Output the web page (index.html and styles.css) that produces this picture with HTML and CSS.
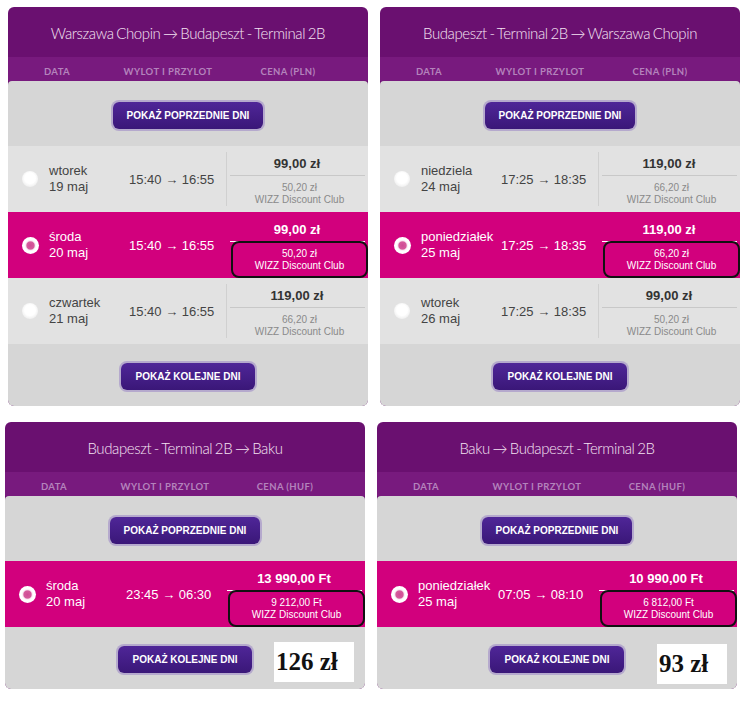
FILE: index.html
```html
<!DOCTYPE html>
<html>
<head>
  <meta charset="utf-8">
  <link rel="stylesheet" href="styles.css">
</head>
<body>
  <div class="board">
    <div class="pair pair-top">
      <section class="flight">
        <div class="flight-title">Warszawa Chopin → Budapeszt - Terminal 2B</div>
        <div class="cols"><span>Data</span><span>Wylot i przylot</span><span>Cena (PLN)</span></div>
        <div class="flight-body">
          <div class="more more-prev"><button class="btn">Pokaż poprzednie dni</button></div>
          <div class="day">
            <span class="radio"></span>
            <div class="date">wtorek<br>19 maj</div>
            <div class="time">15:40 → 16:55</div>
            <div class="price"><b>99,00 zł</b><div class="rule"></div><div class="club">50,20 zł<br>WIZZ Discount Club</div></div>
          </div>
          <div class="day day-on">
            <span class="radio"></span>
            <div class="date">środa<br>20 maj</div>
            <div class="time">15:40 → 16:55</div>
            <div class="price"><b>99,00 zł</b><div class="rule"></div><div class="club">50,20 zł<br>WIZZ Discount Club</div></div>
          </div>
          <div class="day">
            <span class="radio"></span>
            <div class="date">czwartek<br>21 maj</div>
            <div class="time">15:40 → 16:55</div>
            <div class="price"><b>119,00 zł</b><div class="rule"></div><div class="club">66,20 zł<br>WIZZ Discount Club</div></div>
          </div>
          <div class="more more-next"><button class="btn">Pokaż kolejne dni</button></div>
        </div>
      </section>

      <section class="flight">
        <div class="flight-title">Budapeszt - Terminal 2B → Warszawa Chopin</div>
        <div class="cols"><span>Data</span><span>Wylot i przylot</span><span>Cena (PLN)</span></div>
        <div class="flight-body">
          <div class="more more-prev"><button class="btn">Pokaż poprzednie dni</button></div>
          <div class="day">
            <span class="radio"></span>
            <div class="date">niedziela<br>24 maj</div>
            <div class="time">17:25 → 18:35</div>
            <div class="price"><b>119,00 zł</b><div class="rule"></div><div class="club">66,20 zł<br>WIZZ Discount Club</div></div>
          </div>
          <div class="day day-on">
            <span class="radio"></span>
            <div class="date">poniedziałek<br>25 maj</div>
            <div class="time">17:25 → 18:35</div>
            <div class="price"><b>119,00 zł</b><div class="rule"></div><div class="club">66,20 zł<br>WIZZ Discount Club</div></div>
          </div>
          <div class="day">
            <span class="radio"></span>
            <div class="date">wtorek<br>26 maj</div>
            <div class="time">17:25 → 18:35</div>
            <div class="price"><b>99,00 zł</b><div class="rule"></div><div class="club">50,20 zł<br>WIZZ Discount Club</div></div>
          </div>
          <div class="more more-next"><button class="btn">Pokaż kolejne dni</button></div>
        </div>
      </section>
    </div>

    <div class="pair pair-bottom">
      <section class="flight">
        <div class="flight-title">Budapeszt - Terminal 2B → Baku</div>
        <div class="cols"><span>Data</span><span>Wylot i przylot</span><span>Cena (HUF)</span></div>
        <div class="flight-body">
          <div class="more more-prev"><button class="btn">Pokaż poprzednie dni</button></div>
          <div class="day day-on">
            <span class="radio"></span>
            <div class="date">środa<br>20 maj</div>
            <div class="time">23:45 → 06:30</div>
            <div class="price"><b>13 990,00 Ft</b><div class="rule"></div><div class="club">9 212,00 Ft<br>WIZZ Discount Club</div></div>
          </div>
          <div class="more more-next">
            <button class="btn">Pokaż kolejne dni</button>
            <span class="note note-left">126 zł</span>
          </div>
        </div>
      </section>

      <section class="flight">
        <div class="flight-title">Baku → Budapeszt - Terminal 2B</div>
        <div class="cols"><span>Data</span><span>Wylot i przylot</span><span>Cena (HUF)</span></div>
        <div class="flight-body">
          <div class="more more-prev"><button class="btn">Pokaż poprzednie dni</button></div>
          <div class="day day-on">
            <span class="radio"></span>
            <div class="date">poniedziałek<br>25 maj</div>
            <div class="time">07:05 → 08:10</div>
            <div class="price"><b>10 990,00 Ft</b><div class="rule"></div><div class="club">6 812,00 Ft<br>WIZZ Discount Club</div></div>
          </div>
          <div class="more more-next">
            <button class="btn">Pokaż kolejne dni</button>
            <span class="note note-right">93 zł</span>
          </div>
        </div>
      </section>
    </div>
  </div>
</body>
</html>
```
FILE: styles.css
```css
* {
  box-sizing: border-box;
}
body {
  margin: 0;
  background-color: #fff;
  font-family: "Liberation Sans", Arial, sans-serif;
}
.pair {
  display: flex;
  gap: 12px;
}
.pair-top {
  padding: 7px 0 0 8px;
}
.pair-bottom {
  padding: 16px 0 0 5px;
}
.flight {
  width: 360px;
  background-color: #6a1070;
  border-radius: 6px;
  overflow: hidden;
}
.flight-title {
  height: 50px;
  line-height: 52px;
  text-align: center;
  color: #f5e4f3;
  font-family: Lato, sans-serif;
  font-weight: 300;
  font-size: 15px;
  letter-spacing: -0.4px;
  word-spacing: -1px;
}
.cols {
  display: grid;
  grid-template-columns: 98px 124px 1fr;
  height: 24px;
  padding-top: 5px;
  line-height: 20px;
  background-color: #781a7e;
  color: #b483bc;
  font-family: Lato, sans-serif;
  font-weight: 700;
  font-size: 9.5px;
  letter-spacing: 0.4px;
  text-transform: uppercase;
  text-align: center;
}
.cols span:last-child {
  padding-right: 22px;
}
.flight-body {
  background-color: #d6d6d6;
  border-radius: 4px 4px 0 0;
}
.more {
  position: relative;
  text-align: center;
}
.more-prev {
  padding: 21px 0 17px;
}
.more-next {
  padding: 19px 0 16px;
}
.btn {
  height: 27px;
  padding: 0 14px;
  border: 0;
  border-radius: 6px;
  background: linear-gradient(#4f2698, #3a1778);
  box-shadow: 0 0 0 2px #b5a9cd;
  color: #fff;
  font-family: "Liberation Sans", Arial, sans-serif;
  font-weight: bold;
  font-size: 10px;
  text-transform: uppercase;
}

.day {
  display: grid;
  grid-template-columns: 41px 80px 97px 1fr;
  align-items: center;
  background-color: #e2e2e2;
  color: #444;
  font-size: 13px;
}
.day-on {
  background-color: #d2007d;
  color: #fff;
}
.radio {
  width: 16px;
  height: 16px;
  margin-left: 14px;
  border-radius: 50%;
  background: radial-gradient(circle at 50% 45%, #fff 45%, #f1f1f1 70%, #d4d4d4 100%);
}
.day-on .radio {
  width: 17px;
  height: 17px;
  background: radial-gradient(circle, #cf4b95 0, #d55a9c 30%, #fbe9f3 40%, #fff 50%, #fff 66%, #f2c2dc 84%, #e27ab5 100%);
}
.date {
  line-height: 16px;
}
.time {
  white-space: nowrap;
}
.price {
  align-self: stretch;
  padding-top: 10px;
  text-align: center;
  background: linear-gradient(#d0d0d0, #d0d0d0) no-repeat 0 6px / 1px calc(100% - 12px);
}
.day-on .price {
  background: none;
}
.price b {
  display: block;
  line-height: 16px;
  color: #333;
}
.day-on .price b {
  color: #fff;
}
.rule {
  height: 1px;
  margin: 3px 3px 0 4px;
  background-color: #c8c8c8;
}
.day-on .rule {
  background-color: #fff;
}
.club {
  margin: -1px 0 0 5px;
  padding: 5px 0 4px;
  border: 2px solid transparent;
  border-radius: 8px;
  line-height: 12px;
  font-size: 10px;
  color: #8a8a8a;
}
.day-on .club {
  border-color: #111;
  color: #fff;
}

.note {
  position: absolute;
  top: 15px;
  height: 40px;
  padding-left: 2px;
  background-color: #fff;
  color: #111;
  font-family: "Liberation Serif", "Times New Roman", serif;
  font-weight: bold;
  font-size: 25px;
  line-height: 40px;
  text-align: left;
}
.note-left {
  left: 269px;
  width: 80px;
}
.note-right {
  left: 280px;
  top: 17px;
  width: 70px;
}
```
